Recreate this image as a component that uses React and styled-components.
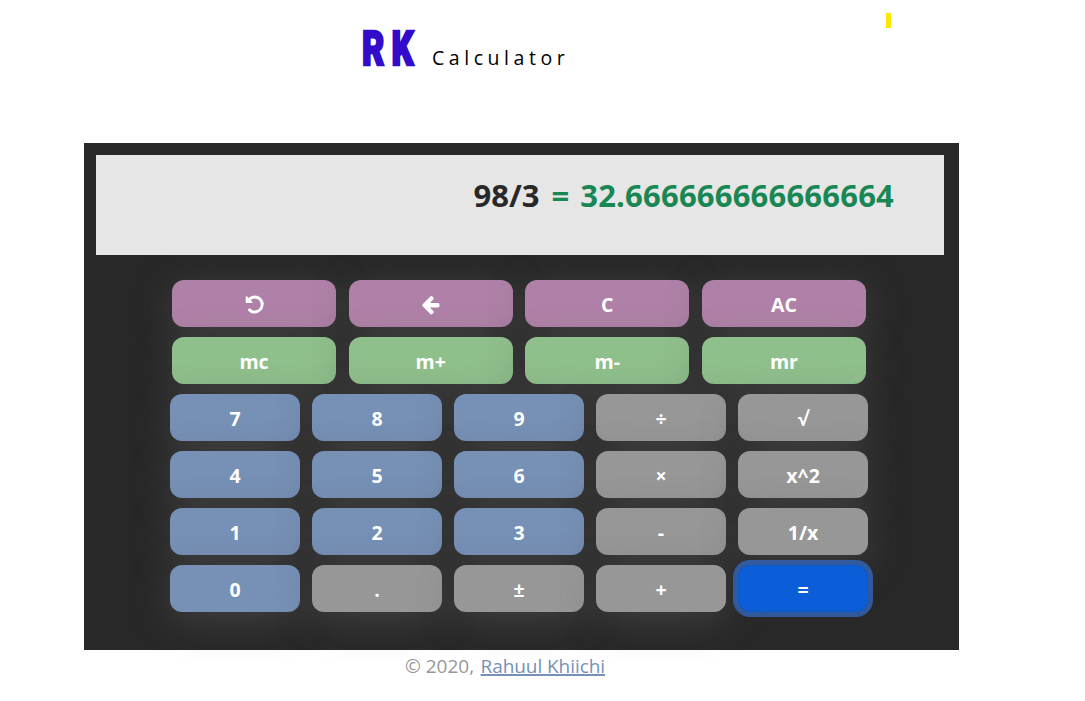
import React from "react";
import styled, { createGlobalStyle, css } from "styled-components";

const GlobalStyle = createGlobalStyle`
  * { box-sizing: border-box; }
  body {
    margin: 0;
    background: #fff;
    font-family: "Open Sans", "Noto Sans", sans-serif;
    overflow: hidden;
  }
`;

const Page = styled.div`
  width: 1085px;
  height: 701px;
  padding: 0 126px 0 84px;
`;

const Header = styled.header`
  display: flex;
  justify-content: space-between;
  height: 143px;
  padding: 13px 68px 0 278px;
`;

const Title = styled.h1`
  display: flex;
  align-items: baseline;
  margin: 0;
  height: 70px;
  line-height: 72px;
  font-weight: 400;
`;

const Initials = styled.span`
  display: block;
  width: 70px;
  font-family: Roboto, sans-serif;
  font-size: 49px;
  font-weight: 900;
  letter-spacing: 10px;
  color: #320bcb;
  white-space: nowrap;
  -webkit-text-stroke: 2.4px #320bcb;
  transform: scaleX(0.7);
  transform-origin: left;
`;

const Name = styled.span`
  font-size: 19.5px;
  font-weight: 400;
  letter-spacing: 4.55px;
  color: #000;
`;

const Marker = styled.div`
  width: 5px;
  height: 15px;
  background: #ffe600;
`;

const Calculator = styled.main`
  width: 875px;
  height: 507px;
  padding: 12px 15px 0 12px;
  background: #282828;
`;

const Display = styled.div`
  display: flex;
  justify-content: flex-end;
  gap: 12px;
  height: 100px;
  padding: 18px 50px 0 0;
  background: #e6e6e6;
  color: #282828;
  font-size: 31px;
  font-weight: 700;
  line-height: 44px;
  white-space: pre;
`;

const Result = styled.span`
  color: #198754;
  letter-spacing: 0.2px;
  word-spacing: 2.5px;
`;

const Keypad = styled.div`
  display: flex;
  flex-direction: column;
  align-items: center;
  gap: 10px;
  padding: 25px 2px 0 0;
`;

const Row = styled.div`
  display: flex;
  gap: ${(p) => (p.$wide ? "12.67px" : "12px")};
`;

const tones = {
  edit: "#b081a8",
  memory: "#8fbf8b",
  digit: "#7690b6",
  operator: "#979797",
};

const Key = styled.button`
  display: flex;
  align-items: center;
  justify-content: center;
  width: ${(p) => (p.$wide ? "164px" : "130px")};
  height: 47px;
  padding: 3px 0 0;
  border: 0;
  border-radius: 12px;
  background: ${(p) => tones[p.$tone]};
  box-shadow: 0 8px 37px rgba(92, 92, 92, 0.47);
  color: #fff;
  font: 700 19.5px/28px "Open Sans", "Noto Sans", sans-serif;
  ${(p) =>
    p.$active &&
    css`
      border: 1px solid #0a58ca;
      background: #0b5ed7;
      box-shadow: 0 0 0 5px rgba(49, 106, 194, 0.75);
    `}
`;

const Icon = styled.svg`
  width: 21px;
  height: 21px;
  margin-top: -1px;
  fill: currentColor;
`;

const Footer = styled.footer`
  padding: 2px 0 0 321px;
  color: #979797;
  font-size: 19px;
  line-height: 28px;
`;

const AuthorLink = styled.a`
  margin-left: 1.5px;
  letter-spacing: -0.07px;
  color: #7690b6;
  text-decoration: underline;
  text-decoration-thickness: 2px;
`;

const UndoIcon = () => (
  <Icon viewBox="0 0 1792 1792">
    <path d="M1664 896q0 156-61 298t-164 245-245 164-298 61q-172 0-327-72.5t-243-204.5q-7-10-6.5-22.5t8.5-20.5l137-138q10-9 25-9 16 2 23 12 73 95 179 147t225 52q104 0 198.5-40.5t163.5-109.5 109.5-163.5 40.5-198.5-40.5-198.5-109.5-163.5-163.5-109.5-198.5-40.5q-98 0-188 35.5t-160 101.5l137 138q31 30 14 69-17 40-59 40h-448q-26 0-45-19t-19-45v-448q0-42 40-59 39-17 69 14l130 129q107-101 244.5-156.5t284.5-55.5q156 0 298 61t245 164 164 245 61 298z" />
  </Icon>
);

const BackIcon = () => (
  <Icon viewBox="0 0 1792 1792">
    <path d="M1664 896v128q0 53-32.5 90.5t-84.5 37.5h-704l293 294q38 36 38 90t-38 90l-75 76q-37 37-90 37-52 0-91-37l-651-652q-37-37-37-90 0-52 37-91l651-650q38-38 91-38 52 0 90 38l75 74q38 38 38 91t-38 91l-293 293h704q52 0 84.5 37.5t32.5 90.5z" />
  </Icon>
);

const wideRows = [
  { tone: "edit", keys: [<UndoIcon />, <BackIcon />, "C", "AC"] },
  { tone: "memory", keys: ["mc", "m+", "m-", "mr"] },
];

const rows = [
  ["7", "8", "9", "÷", "√"],
  ["4", "5", "6", "×", "x^2"],
  ["1", "2", "3", "-", "1/x"],
  ["0", ".", "±", "+", "="],
];

export default function App() {
  return (
    <Page>
      <GlobalStyle />
      <Header>
        <Title>
          <Initials>RK</Initials>
          <Name>Calculator</Name>
        </Title>
        <Marker />
      </Header>
      <Calculator>
        <Display>
          <span>98/3</span>
          <Result>= 32.666666666666664</Result>
        </Display>
        <Keypad>
          {wideRows.map(({ tone, keys }) => (
            <Row key={tone} $wide>
              {keys.map((label, i) => (
                <Key key={i} $wide $tone={tone}>
                  {label}
                </Key>
              ))}
            </Row>
          ))}
          {rows.map((keys) => (
            <Row key={keys[0]}>
              {keys.map((label) => (
                <Key
                  key={label}
                  $tone={/^\d$/.test(label) ? "digit" : "operator"}
                  $active={label === "="}
                >
                  {label}
                </Key>
              ))}
            </Row>
          ))}
        </Keypad>
      </Calculator>
      <Footer>
        © 2020, <AuthorLink href="#">Rahuul Khiichi</AuthorLink>
      </Footer>
    </Page>
  );
}
